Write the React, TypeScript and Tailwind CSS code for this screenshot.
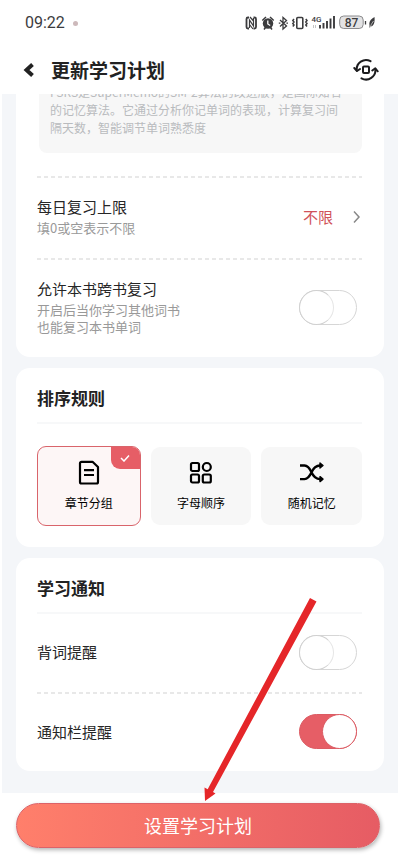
import { useState } from "react";
import type { ReactNode } from "react";

type SortRule = "chapter" | "alphabet" | "random";

function StatusBar() {
  return (
    <div className="flex h-[46px] items-center justify-between pl-[25px] pr-[25px] text-[#3c3c3e]">
      <div className="flex items-center gap-2">
        <span className="font-['Roboto',sans-serif] text-[16px] leading-5">09:22</span>
        <span className="size-[5px] rounded-full bg-[#cdb9bb]" />
      </div>
      <svg width="130" height="18" viewBox="245 14 130 18" fill="none" stroke="currentColor">
        {/* NFC */}
        <path d="M249 17.500h-1q-1.500 0-1.500 1.500v8q0 1.500 1.500 1.500h1M253.500 17.500h1q1.500 0 1.500 1.500v8q0 1.500-1.500 1.500h-1" strokeWidth="1.800" />
        <path d="M249.500 28v-8l4 6V18M250 17l3.500 4M249.500 24.500l3.500 4.500" strokeWidth="1.200" />
        {/* alarm */}
        <circle cx="268" cy="23.500" r="5.200" fill="currentColor" stroke="none" />
        <path d="M262.300 20.500l3.700-3.500M273.700 20.500L270 17M264 29.500l1.500-2M272 29.500l-1.500-2" strokeWidth="1.500" />
        <path d="M267.800 20.500v3.500l2.400 1.500" stroke="white" strokeWidth="1.300" />
        {/* bluetooth */}
        <path d="M280 20l6.500 6-3.500 3V17.500l3.500 3-6.500 6" strokeWidth="1.300" />
        <path d="M278.800 23.200h1.600M286.400 23.200h1.600" strokeWidth="1.300" />
        {/* vibrate */}
        <rect x="296.800" y="17.500" width="6" height="11" rx="1" strokeWidth="1.600" />
        <path d="M294 19l-1.200 1.500 1.200 1.500-1.200 1.500 1.200 1.500-1.200 1.500M305.800 19l1.200 1.500-1.200 1.500 1.200 1.500-1.200 1.500 1.200 1.500" strokeWidth="1.500" />
        {/* signal */}
        <text x="311.500" y="22" fontSize="8" fontWeight="500" fontFamily="Roboto, sans-serif" fill="currentColor" stroke="none">4G</text>
        <path d="M313.500 25v3M315.500 25v3" stroke="#b5b5b5" strokeWidth="0.800" />
        <path d="M320 25v3.500M323.500 23v5.500M327 21v7.500M330.500 18.500v10M334 16v12.500" strokeWidth="1.900" />
        {/* battery */}
        <rect x="339.700" y="16" width="23.500" height="12.500" rx="4" fill="#e3e3e4" stroke="#8b8b8d" />
        <text x="351.500" y="26.500" textAnchor="middle" fontSize="12" fontWeight="500" fontFamily="Roboto, sans-serif" fill="currentColor" stroke="none">87</text>
        <path d="M365.500 21v3.500" strokeWidth="1.300" />
        <path d="M369.500 25q-1-5 5-8 .8 9-3.500 9.500l-1.500 1.500z" fill="currentColor" stroke="none" />
        <path d="M370 28q1-4 3.500-7" stroke="white" strokeWidth="0.600" />
      </svg>
    </div>
  );
}

function Header() {
  return (
    <header className="flex h-12 items-center pl-[22px] pr-[21px]">
      <button type="button" aria-label="返回" className="flex h-8 w-[29px] items-center">
        <svg width="13" height="16" viewBox="0 0 13 16" fill="none" stroke="#222" strokeWidth="4">
          <path d="M10.500 2.500L4.500 8l6 5.500" />
        </svg>
      </button>
      <h1 className="text-[19px] leading-7 font-bold text-[#222]">更新学习计划</h1>
      <button type="button" aria-label="重置" className="ml-auto">
        <svg
          width="26"
          height="24"
          viewBox="353 58 26 24"
          fill="none"
          stroke="#1c1c1e"
          strokeWidth="2"
          strokeLinecap="round"
          strokeLinejoin="round"
        >
          <path d="M370.500 61.200A9.300 9.300 0 0 0 356.800 70.500M361.500 78.300A9.300 9.300 0 0 0 375.300 69" />
          <path d="M354.300 68l2.700 3 3-2M372.300 70.500l3-2.200 2.400 3" />
          <rect x="363" y="66.500" width="6" height="6.500" rx="1" />
        </svg>
      </button>
    </header>
  );
}

function Card({ children }: { children: ReactNode }) {
  return <section className="rounded-[14px] bg-white pr-[22px] pl-[21px]">{children}</section>;
}

function CardTitle({ children }: { children: ReactNode }) {
  return (
    <h2 className="border-b-2 border-[#f7f8f9] pt-[18px] pb-3 text-[17px] leading-6 font-bold text-[#222]">
      {children}
    </h2>
  );
}

function DashedLine() {
  return (
    <div className="h-0.5 bg-[repeating-linear-gradient(90deg,#e8e8e8_0px,#e8e8e8_4px,transparent_4px,transparent_7px)]" />
  );
}

interface SwitchProps {
  id: string;
  checked: boolean;
  onChange: (checked: boolean) => void;
}

function Switch({ id, checked, onChange }: SwitchProps) {
  return (
    <label htmlFor={id} className="relative mr-[5px] block h-[35px] w-[58px] shrink-0">
      <input
        id={id}
        type="checkbox"
        checked={checked}
        onChange={(e) => onChange(e.target.checked)}
        className="peer sr-only"
      />
      <span className="block h-full rounded-full border border-[#d6d6d6] bg-white peer-checked:border-[#dc5b63] peer-checked:bg-[#e65e66]" />
      <span className="absolute top-0 left-0 size-[35px] rounded-full border border-[#d0d0d0] border-r-[#e6e6e6] bg-white peer-checked:right-0 peer-checked:left-auto peer-checked:border-[#dc5b63]" />
    </label>
  );
}

function DocIcon() {
  return (
    <svg width="24" height="26" viewBox="0 0 24 26" fill="none" stroke="black" strokeWidth="2.200" strokeLinejoin="round">
      <path d="M4.500 1.800H15.500L21 7v15a1.500 1.500 0 0 1-1.500 1.500h-15A1.500 1.500 0 0 1 3 22V3.300A1.500 1.500 0 0 1 4.500 1.800z" />
      <path d="M7 10.200h10M7 15h10" />
    </svg>
  );
}

function GridIcon() {
  return (
    <svg width="24" height="26" viewBox="0 0 24 26" fill="none" stroke="black" strokeWidth="2.200">
      <rect x="2" y="3" width="8" height="8" rx="1.500" />
      <circle cx="17.800" cy="7" r="4" />
      <rect x="2" y="14.500" width="8" height="8" rx="1.500" />
      <rect x="13.800" y="14.500" width="8" height="8" rx="1.500" />
    </svg>
  );
}

function RandomIcon() {
  return (
    <svg width="24" height="26" viewBox="0 0 24 26" fill="none" stroke="black" strokeWidth="2.400">
      <path d="M0 5.500h4.500q4 0 7 6.800q3 6.800 8.500 6.800M0 19.100h4.500q4 0 7-6.800q3-6.800 8.500-6.800" />
      <path d="M20 3l3 2.500-3 2.500zM20 16.600l3 2.500-3 2.500z" fill="black" strokeWidth="1.400" strokeLinejoin="round" />
    </svg>
  );
}

const sortOptions: { value: SortRule; label: string; icon: ReactNode }[] = [
  { value: "chapter", label: "章节分组", icon: <DocIcon /> },
  { value: "alphabet", label: "字母顺序", icon: <GridIcon /> },
  { value: "random", label: "随机记忆", icon: <RandomIcon /> },
];

export default function App() {
  const [sortRule, setSortRule] = useState<SortRule>("chapter");
  const [crossBook, setCrossBook] = useState(false);
  const [wordReminder, setWordReminder] = useState(false);
  const [barReminder, setBarReminder] = useState(true);

  return (
    <div className="relative flex min-h-screen flex-col bg-white font-['Noto_Sans_CJK_SC',sans-serif] text-[#262626]">
      <StatusBar />
      <Header />

      <main className="mx-0.5 flex flex-col gap-[11px] bg-[#f4f6f9] px-3.5 pb-[22px]">
        <section className="rounded-b-[14px] bg-white pr-[22px] pl-[21px]">
          {/* scrolled partly under the header */}
          <div className="ml-0.5 flex h-[59px] flex-col justify-end overflow-hidden">
            <p className="shrink-0 rounded-[8px] bg-[#f7f7f7] pt-4 pb-4 pl-[11px] text-[12px] leading-[18px] text-[#b9bbbe]">
              FSRS是SuperMemo的SM-2算法的改进版，是国际知名
              <br />
              的记忆算法。它通过分析你记单词的表现，计算复习间
              <br />
              隔天数，智能调节单词熟悉度
            </p>
          </div>
          <div className="h-[23px]" />
          <DashedLine />
          <div className="flex items-center justify-between pt-[19px] pb-[22px]">
            <div>
              <h3 className="text-[15px] leading-5">每日复习上限</h3>
              <p className="mt-0.5 text-[13px] leading-[17px] text-[#999]">填0或空表示不限</p>
            </div>
            <button type="button" className="flex items-center gap-5 text-[15px] leading-5 text-[#d0525a]">
              不限
              <svg width="9" height="14" viewBox="0 0 9 14" fill="none" stroke="#888" strokeWidth="1.500">
                <path d="M1 1.500L6 7l-5 5.500" />
              </svg>
            </button>
          </div>
          <DashedLine />
          <div className="flex items-center justify-between pt-[19px] pb-[22px]">
            <div>
              <h3 className="text-[15px] leading-5">允许本书跨书复习</h3>
              <p className="mt-0.5 text-[13px] leading-[17px] text-[#999]">
                开启后当你学习其他词书
                <br />
                也能复习本书单词
              </p>
            </div>
            <Switch id="cross-book" checked={crossBook} onChange={setCrossBook} />
          </div>
        </section>

        <Card>
          <CardTitle>排序规则</CardTitle>
          <div className="grid grid-cols-[103fr_100fr_100fr] items-center gap-2.5 pt-[22px] pb-[21px]">
            {sortOptions.map((option) => {
              const active = option.value === sortRule;
              return (
                <button
                  key={option.value}
                  type="button"
                  aria-pressed={active}
                  onClick={() => setSortRule(option.value)}
                  className={`relative flex flex-col items-center gap-2 overflow-hidden rounded-[9px] pt-[13px] text-[12px] leading-[18px] text-black ${
                    active ? "h-20 border border-[#d9646b] bg-[#fdf6f6]" : "h-[78px] bg-[#f7f7f7]"
                  }`}
                >
                  {option.icon}
                  {option.label}
                  {active && (
                    <span className="absolute top-0 right-0 flex h-[22px] w-[29px] items-center justify-center rounded-bl-[9px] bg-[#e65e66]">
                      <svg width="10" height="8" viewBox="0 0 10 8" fill="none" stroke="white" strokeWidth="1.500">
                        <path d="M1 4l3 3 5-5.500" />
                      </svg>
                    </span>
                  )}
                </button>
              );
            })}
          </div>
        </Card>

        <Card>
          <CardTitle>学习通知</CardTitle>
          <div className="flex h-[78px] items-center justify-between pb-0.5">
            <label htmlFor="word-reminder" className="text-[15px] leading-5">
              背词提醒
            </label>
            <Switch id="word-reminder" checked={wordReminder} onChange={setWordReminder} />
          </div>
          <DashedLine />
          <div className="flex h-[77px] items-center justify-between pb-0.5">
            <label htmlFor="bar-reminder" className="text-[15px] leading-5">
              通知栏提醒
            </label>
            <Switch id="bar-reminder" checked={barReminder} onChange={setBarReminder} />
          </div>
        </Card>
      </main>

      <footer className="pt-2.5 pr-5 pb-[18px] pl-4">
        <button
          type="button"
          className="h-[45px] w-full rounded-full border border-[#dc6268] bg-linear-to-r from-[#ff7f6b] to-[#e65c64] pb-0.5 text-[18px] leading-6 text-white shadow-[1px_2px_4px_rgba(0,0,0,0.3)]"
        >
          设置学习计划
        </button>
      </footer>

      {/* pointer to the submit button */}
      <svg
        className="pointer-events-none absolute top-[596px] left-[200px]"
        width="120"
        height="208"
        viewBox="200 596 120 208"
        fill="#e52629"
      >
        <path d="M310 598l6.500 3.500L213 792l2.500 1.500L205 801l-.5-13.500 3.200 1.700z" />
      </svg>
    </div>
  );
}
